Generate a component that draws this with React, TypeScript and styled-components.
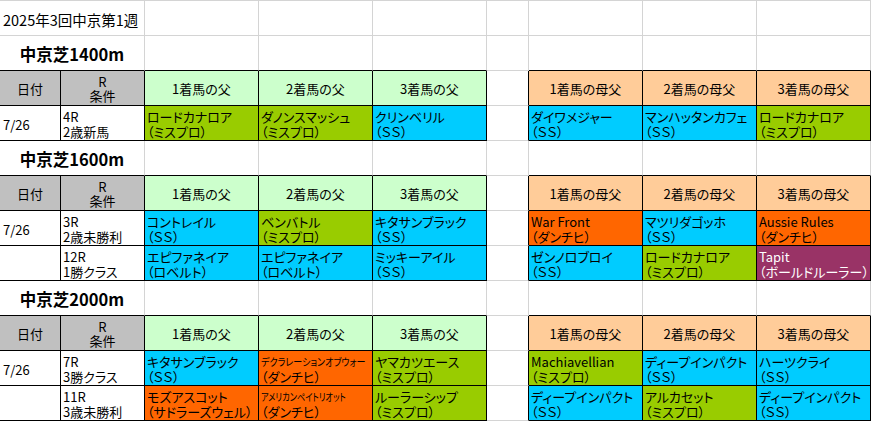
import React from 'react';
import styled, { createGlobalStyle } from 'styled-components';

const BLACK = '#000';
const GRID = '#d4d4d4';

const GlobalStyle = createGlobalStyle`
  body {
    margin: 0;
    background: #fff;
    font-family: "Noto Sans CJK JP", "Noto Sans", sans-serif;
    color: #000;
  }
`;

// シート全体（Excel 風のグリッド）
const Sheet = styled.div`
  display: grid;
  grid-template-columns: 61px 84px 114px 114px 114px 42px 114px 114px 114px;
  grid-auto-rows: 35px;
  width: 871px;
  border-top: 1px solid ${GRID};
  font-feature-settings: "palt";
`;

const Cell = styled.div<{ $right?: string; $bottom?: string; $bg?: string; $span?: number }>`
  box-sizing: border-box;
  min-width: 0;
  overflow: hidden;
  white-space: nowrap;
  background: ${({ $bg }) => $bg || '#fff'};
  border-right: 1px solid ${({ $right }) => $right || GRID};
  border-bottom: 1px solid ${({ $bottom }) => $bottom || GRID};
  grid-column: ${({ $span }) => ($span ? `span ${$span}` : 'auto')};
`;

const SheetTitle = styled(Cell)`
  display: flex;
  align-items: center;
  overflow: visible;
  padding: 2px 0 0 3px;
  font-size: 14.5px;
`;

const SectionTitle = styled(Cell)`
  display: flex;
  align-items: center;
  justify-content: center;
  padding-top: 2px;
  font-size: 16.5px;
  font-weight: 700;
`;

const HeaderCell = styled(Cell)`
  display: flex;
  flex-direction: column;
  align-items: center;
  justify-content: center;
  font-size: 13px;
  line-height: 14px;
  padding-top: 1px;
`;

const DateCell = styled(Cell)`
  display: flex;
  align-items: center;
  padding: 3px 0 0 3px;
  font-size: 13px;
`;

const TextCell = styled(Cell)<{ $color?: string }>`
  display: flex;
  flex-direction: column;
  align-items: flex-start;
  padding: 3px 0 0 2px;
  font-size: 13px;
  line-height: 15px;
  color: ${({ $color }) => $color || '#000'};
`;

// セル内の1行（縮小して全体を表示する行は横に詰める）
const Line = styled.span<{ $scale?: number }>`
  display: block;
  height: 15px;
  font-size: ${({ $scale }) => ($scale ? '10.5px' : 'inherit')};
  transform: ${({ $scale }) => ($scale ? `scaleX(${$scale})` : 'none')};
  transform-origin: left center;
`;

const HeadLine = styled.span`
  display: block;
  height: 14px;
`;

const LINE_BG: Record<string, string> = {
  'ＳＳ': '#00ccff',
  'ミスプロ': '#99cc00',
  'ダンチヒ': '#ff6600',
  'ロベルト': '#00ccff',
  'サドラーズウェル': '#ff6600',
  'ボールドルーラー': '#993366',
};

type Horse = { name: string; line: string; scale?: number };
type Race = { date: string; no: string; cond: string; sires: Horse[]; damSires: Horse[] };
type Section = { title: string; races: Race[] };

const SS = 'ＳＳ';

const sections: Section[] = [
  {
    title: '中京芝1400m',
    races: [
      {
        date: '7/26', no: '4R', cond: '2歳新馬',
        sires: [
          { name: 'ロードカナロア', line: 'ミスプロ' },
          { name: 'ダノンスマッシュ', line: 'ミスプロ' },
          { name: 'クリンベリル', line: SS },
        ],
        damSires: [
          { name: 'ダイワメジャー', line: SS },
          { name: 'マンハッタンカフェ', line: SS },
          { name: 'ロードカナロア', line: 'ミスプロ' },
        ],
      },
    ],
  },
  {
    title: '中京芝1600m',
    races: [
      {
        date: '7/26', no: '3R', cond: '2歳未勝利',
        sires: [
          { name: 'コントレイル', line: SS },
          { name: 'ベンバトル', line: 'ミスプロ' },
          { name: 'キタサンブラック', line: SS },
        ],
        damSires: [
          { name: 'War Front', line: 'ダンチヒ' },
          { name: 'マツリダゴッホ', line: SS },
          { name: 'Aussie Rules', line: 'ダンチヒ' },
        ],
      },
      {
        date: '', no: '12R', cond: '1勝クラス',
        sires: [
          { name: 'エピファネイア', line: 'ロベルト' },
          { name: 'エピファネイア', line: 'ロベルト' },
          { name: 'ミッキーアイル', line: SS },
        ],
        damSires: [
          { name: 'ゼンノロブロイ', line: SS },
          { name: 'ロードカナロア', line: 'ミスプロ' },
          { name: 'Tapit', line: 'ボールドルーラー' },
        ],
      },
    ],
  },
  {
    title: '中京芝2000m',
    races: [
      {
        date: '7/26', no: '7R', cond: '3勝クラス',
        sires: [
          { name: 'キタサンブラック', line: SS },
          { name: 'デクラレーションオブウォー', line: 'ダンチヒ', scale: 0.86 },
          { name: 'ヤマカツエース', line: 'ミスプロ' },
        ],
        damSires: [
          { name: 'Machiavellian', line: 'ミスプロ' },
          { name: 'ディープインパクト', line: SS },
          { name: 'ハーツクライ', line: SS },
        ],
      },
      {
        date: '', no: '11R', cond: '3歳未勝利',
        sires: [
          { name: 'モズアスコット', line: 'サドラーズウェル' },
          { name: 'アメリカンペイトリオット', line: 'ダンチヒ', scale: 0.78 },
          { name: 'ルーラーシップ', line: 'ミスプロ' },
        ],
        damSires: [
          { name: 'ディープインパクト', line: SS },
          { name: 'アルカセット', line: 'ミスプロ' },
          { name: 'ディープインパクト', line: SS },
        ],
      },
    ],
  },
];

function HorseCell({ horse }: { horse: Horse }) {
  const bg = LINE_BG[horse.line];
  return (
    <TextCell $bg={bg} $right={BLACK} $bottom={BLACK} $color={horse.line === 'ボールドルーラー' ? '#fff' : '#000'}>
      <Line $scale={horse.scale}>{horse.name}</Line>
      <Line>（{horse.line}）</Line>
    </TextCell>
  );
}

function SectionBlock({ section }: { section: Section }) {
  return (
    <>
      <SectionTitle $span={2} $bottom={BLACK}>{section.title}</SectionTitle>
      <Cell $bottom={BLACK} />
      <Cell $bottom={BLACK} />
      <Cell $bottom={BLACK} />
      <Cell />
      <Cell $bottom={BLACK} />
      <Cell $bottom={BLACK} />
      <Cell $bottom={BLACK} />

      <HeaderCell $bg="#c0c0c0" $right={BLACK} $bottom={BLACK}>日付</HeaderCell>
      <HeaderCell $bg="#c0c0c0" $right={BLACK} $bottom={BLACK}>
        <HeadLine>R</HeadLine>
        <HeadLine>条件</HeadLine>
      </HeaderCell>
      {[1, 2, 3].map((n) => (
        <HeaderCell key={`s${n}`} $bg="#ccffcc" $right={BLACK} $bottom={BLACK}>{n}着馬の父</HeaderCell>
      ))}
      <Cell $right={BLACK} />
      {[1, 2, 3].map((n) => (
        <HeaderCell key={`d${n}`} $bg="#ffcc99" $right={BLACK} $bottom={BLACK}>{n}着馬の母父</HeaderCell>
      ))}

      {section.races.map((race) => (
        <React.Fragment key={race.no}>
          <DateCell $right={BLACK} $bottom={BLACK}>{race.date}</DateCell>
          <TextCell $right={BLACK} $bottom={BLACK}>
            <Line>{race.no}</Line>
            <Line>{race.cond}</Line>
          </TextCell>
          {race.sires.map((h, i) => <HorseCell key={`s${i}`} horse={h} />)}
          <Cell $right={BLACK} />
          {race.damSires.map((h, i) => <HorseCell key={`d${i}`} horse={h} />)}
        </React.Fragment>
      ))}
    </>
  );
}

export default function App() {
  return (
    <>
      <GlobalStyle />
      <Sheet>
        <SheetTitle $span={2}>2025年3回中京第1週</SheetTitle>
        {Array.from({ length: 7 }).map((_, i) => <Cell key={i} />)}
        {sections.map((s) => <SectionBlock key={s.title} section={s} />)}
      </Sheet>
    </>
  );
}
